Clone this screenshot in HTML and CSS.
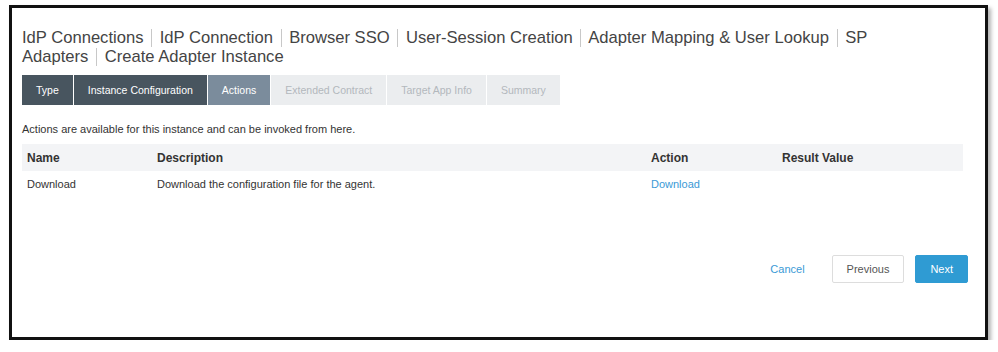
FILE: index.html
```html
<!DOCTYPE html>
<html lang="en">
<head>
    <meta charset="UTF-8">
    <title>Create Adapter Instance</title>
    <link rel="stylesheet" href="styles.css">
</head>
<body>
    <div class="frame">
        <h1 class="crumbs">
            <span>IdP Connections</span> <span class="sep"></span>
            <span>IdP Connection</span> <span class="sep"></span>
            <span>Browser SSO</span> <span class="sep"></span>
            <span>User-Session Creation</span> <span class="sep"></span>
            <span>Adapter Mapping &amp; User Lookup</span> <span class="sep"></span>
            <span>SP</span> <span>Adapters</span> <span class="sep"></span>
            <span>Create Adapter Instance</span>
        </h1>

        <div class="tabs">
            <div class="tab done">Type</div>
            <div class="tab done">Instance Configuration</div>
            <div class="tab current">Actions</div>
            <div class="tab">Extended Contract</div>
            <div class="tab">Target App Info</div>
            <div class="tab">Summary</div>
        </div>

        <p class="intro">Actions are available for this instance and can be invoked from here.</p>

        <table class="actions">
            <thead>
                <tr>
                    <th class="col-name">Name</th>
                    <th class="col-desc">Description</th>
                    <th class="col-action">Action</th>
                    <th>Result Value</th>
                </tr>
            </thead>
            <tbody>
                <tr>
                    <td>Download</td>
                    <td>Download the configuration file for the agent.</td>
                    <td><a href="#" class="link">Download</a></td>
                    <td></td>
                </tr>
            </tbody>
        </table>

        <div class="button-row">
            <a href="#" class="link cancel">Cancel</a>
            <button class="btn">Previous</button>
            <button class="btn primary">Next</button>
        </div>
    </div>
</body>
</html>
```

FILE: styles.css
```css
body {
    margin: 0;
    background-color: #fff;
    font-family: "Liberation Sans", Arial, sans-serif;
    color: #333;
}

/* Screenshot frame */
.frame {
    margin: 5px 0 0 9px;
    width: 953px;
    height: 329px;
    border: 3px solid #111;
    box-shadow: 3px 3px 4px rgba(0, 0, 0, 0.3);
    padding: 0 10px;
}

.crumbs {
    max-width: 900px;
    margin: 0;
    padding-top: 20px;
    font-size: 16.6px;
    font-weight: normal;
    line-height: 19px;
    color: #444;
}

.sep {
    display: inline-block;
    width: 1px;
    height: 18px;
    margin: 0 3px;
    background-color: #c8c8c8;
    vertical-align: -4px;
}

/* Wizard steps */
.tabs {
    display: flex;
    margin-top: 9px;
}

.tab {
    height: 30px;
    line-height: 30px;
    padding: 0 14px;
    font-size: 10.5px;
    background-color: #ebedef;
    color: #b3b8bd;
    margin-right: 1px;
}

.tab.done {
    background-color: #48555f;
    color: #fff;
}

.tab.current {
    background-color: #7b8c9c;
    color: #fff;
}

.intro {
    margin: 18px 0 0;
    font-size: 11px;
    line-height: 13px;
}

/* Actions table */
.actions {
    width: 941px;
    margin-top: 8px;
    border-collapse: collapse;
    font-size: 11px;
}

.actions th {
    background-color: #f3f4f6;
    text-align: left;
    font-size: 12px;
    font-weight: bold;
    height: 27px;
    padding: 0 5px;
    color: #333;
}

.actions td {
    height: 26px;
    padding: 0 5px;
}

.col-name {
    width: 120px;
}

.col-desc {
    width: 484px;
}

.col-action {
    width: 121px;
}

.link {
    color: #3a9ad6;
    text-decoration: none;
}

/* Footer buttons */
.button-row {
    display: flex;
    justify-content: flex-end;
    align-items: center;
    width: 946px;
    margin-top: 58px;
}

.cancel {
    font-size: 11px;
    margin-right: 16px;
}

.btn {
    height: 28px;
    padding: 0 14px;
    font-family: "Liberation Sans", Arial, sans-serif;
    font-size: 11px;
    color: #555;
    background-color: #fff;
    border: 1px solid #ddd;
    border-radius: 2px;
    margin-left: 11px;
}

.btn.primary {
    background-color: #2f9bd3;
    border-color: #2f9bd3;
    color: #fff;
}
```
